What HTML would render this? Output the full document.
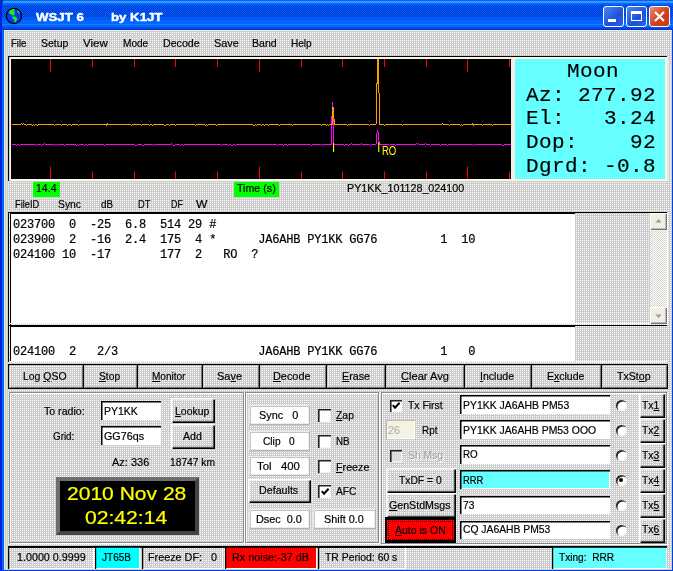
<!DOCTYPE html>
<html><head><meta charset="utf-8"><title>WSJT 6 by K1JT</title>
<style>
html,body{margin:0;padding:0}
body{width:673px;height:571px;position:relative;overflow:hidden;background:#0a3fd6;font-family:"Liberation Sans",sans-serif;font-size:11px;color:#000}
div,span,svg{position:absolute;box-sizing:border-box}
.t{white-space:nowrap;transform-origin:0 0;display:block;-webkit-text-stroke:0.2px}
.t u{text-decoration:underline}
.d{background-color:#ccc;background-image:linear-gradient(90deg,rgba(0,0,0,0) 50%,#ccc 50%),linear-gradient(#fff 50%,#ccc 50%);background-size:2px 2px}
.btn{box-shadow:inset 1.6px 1.6px 0 #fff,inset -1.3px -1.3px 0 #000,inset -2.2px -2.2px 0 #666}
.btn2{box-shadow:inset 0 0 0 1.2px #000,inset 2.2px 2.2px 0 #fff,inset -2.2px -2.2px 0 #999}
.sunk{background:#fff;box-shadow:inset 1.5px 1.6px 0 #000,inset -1px -1px 0 #fff}
.flat{background:#fff;border:1px solid;border-color:#ececec #b4b4b4 #b4b4b4 #ececec;box-shadow:inset 1px 1px 0 #c4c4c4,inset -1px -1px 0 #ececec}
.grv{border:1px solid #8a8a8a;box-shadow:inset 1px 1px 0 #fff,1px 1px 0 #fff}
.mono{font-family:"Liberation Mono",monospace;white-space:pre;-webkit-text-stroke:0}
.chk{background:#fff;box-shadow:inset 1.6px 1.6px 0 #222,inset -1px -1px 0 #f4f4f4}
.rad{border-radius:50%;background:#fff;box-shadow:inset 1.5px 1.5px 0 #222,inset -1px -1px 0 #f4f4f4}
.st{box-shadow:inset 1.2px 1.7px 0 #000,inset -1px -1px 0 #fff}
</style></head><body><div id="w" style="left:0;top:0;width:673px;height:571px;will-change:transform">

<div class="" style="left:0px;top:0px;width:673px;height:30px;background:#06f"></div>
<div class="" style="left:0px;top:0px;width:673px;height:1px;background:#0a5ef0"></div>
<div class="" style="left:0px;top:1px;width:673px;height:2px;background:#39f"></div>
<div class="" style="left:0px;top:5px;width:673px;height:12px;background:repeating-conic-gradient(#06f 0 25%,#03c 0 50%) 0 0/2px 2px"></div>
<div class="" style="left:0px;top:17px;width:673px;height:3px;background:#0059f2"></div>
<div class="" style="left:0px;top:24px;width:673px;height:1px;background:#1a7aff"></div>
<div class="" style="left:0px;top:27px;width:673px;height:2px;background:repeating-conic-gradient(#06f 0 25%,#03c 0 50%) 0 0/2px 2px"></div>
<div class="" style="left:0px;top:29px;width:673px;height:1px;background:#03c"></div>
<div class="" style="left:0px;top:3px;width:2px;height:568px;background:#02d"></div>
<div class="" style="left:2px;top:30px;width:2px;height:541px;background:#06f"></div>
<div class="" style="left:671.6px;top:30px;width:1.4px;height:541px;background:#04d"></div>
<div class="" style="left:0px;top:569.6px;width:673px;height:1.4px;background:#04d"></div>
<div class="" style="left:0px;top:0px;width:3px;height:3px;background:#0830b0;"></div>
<svg style="left:5px;top:7px" width="18" height="18" viewBox="0 0 18 18"><circle cx="9" cy="9" r="7.6" fill="#0a35f0" stroke="#000" stroke-width="1.3"/><path d="M4.5 3.5 L8 2 L10 2.5 L9 4.5 L10.5 5.5 L9 7 L10 8 L8.5 8.5 L6.5 8 L5 6.5 L3.5 6 Z M7 9.5 L10 9.5 L12 11 L12.5 12 L11.5 13 L11 15.5 L9.5 15 L9 12.5 L7.5 11.5 Z M12 3 L14 4.5 L15 7 L14 6.5 L12.5 5 Z" fill="#10f020"/></svg>
<span class="t" style="left:36.20px;top:9.60px;font-size:11px;line-height:14px;transform:scaleX(1.2031);color:#fff;font-weight:bold;-webkit-text-stroke:0.4px;">WSJT 6</span>
<span class="t" style="left:110.90px;top:9.60px;font-size:11px;line-height:14px;transform:scaleX(1.2011);color:#fff;font-weight:bold;-webkit-text-stroke:0.4px;">by K1JT</span>
<div class="" style="left:603px;top:6px;width:21px;height:21px;border:1px solid #fff;border-radius:3px;background:linear-gradient(135deg,#4d86f0,#1c50d8 60%,#2a63e6)"></div>
<div class="" style="left:608px;top:19px;width:8px;height:3px;background:#fff"></div>
<div class="" style="left:626px;top:6px;width:21px;height:21px;border:1px solid #fff;border-radius:3px;background:linear-gradient(135deg,#4d86f0,#1c50d8 60%,#2a63e6)"></div>
<div class="" style="left:631px;top:11px;width:11px;height:10px;border:1px solid #fff;border-top:3px solid #fff"></div>
<div class="" style="left:649px;top:6px;width:21px;height:21px;border:1px solid #fff;border-radius:3px;background:linear-gradient(135deg,#ea8a6c,#d0421c 55%,#c83a14)"></div>
<svg style="left:649px;top:6px" width="21" height="21"><path d="M6 6 L15 15 M15 6 L6 15" stroke="#fff" stroke-width="2.2" fill="none"/></svg>
<div class="d" style="left:4px;top:30px;width:667.6px;height:539.6px;"></div>
<div class="" style="left:4px;top:30px;width:667.6px;height:1px;background:#eee"></div>
<div class="" style="left:4px;top:30px;width:1px;height:539.6px;background:#e6e6e6"></div>
<span class="t" style="left:10.60px;top:36.00px;font-size:11px;line-height:14px;transform:scaleX(0.8688);">File</span>
<span class="t" style="left:40.90px;top:36.00px;font-size:11px;line-height:14px;transform:scaleX(0.9497);">Setup</span>
<span class="t" style="left:83.30px;top:36.00px;font-size:11px;line-height:14px;transform:scaleX(1.0446);">View</span>
<span class="t" style="left:123.00px;top:36.00px;font-size:11px;line-height:14px;transform:scaleX(0.9158);">Mode</span>
<span class="t" style="left:162.60px;top:36.00px;font-size:11px;line-height:14px;transform:scaleX(0.9653);">Decode</span>
<span class="t" style="left:213.60px;top:36.00px;font-size:11px;line-height:14px;transform:scaleX(0.9891);">Save</span>
<span class="t" style="left:252.30px;top:36.00px;font-size:11px;line-height:14px;transform:scaleX(0.9614);">Band</span>
<span class="t" style="left:291.40px;top:36.00px;font-size:11px;line-height:14px;transform:scaleX(0.9150);">Help</span>
<div class="" style="left:8.4px;top:56px;width:658.4px;height:1px;background:#000"></div>
<div class="" style="left:8.4px;top:56px;width:1.1px;height:125px;background:#000"></div>
<div class="" style="left:9.5px;top:57px;width:657.5px;height:1.6px;background:#f8f6e4"></div>
<div class="" style="left:9.5px;top:57px;width:1.5px;height:124px;background:#f8f6e4"></div>
<div class="" style="left:9.5px;top:179px;width:657.5px;height:1.6px;background:#f8f6e4"></div>
<div class="" style="left:665.3px;top:57px;width:1.7px;height:124px;background:#f8f6e4"></div>
<div class="" style="left:667px;top:56px;width:2px;height:125px;background:#e8e8e8"></div>
<div class="" style="left:11px;top:58.6px;width:500.1px;height:120.4px;background:#000"></div>
<div class="" style="left:511.1px;top:58.6px;width:3.6px;height:120.4px;background:#f0f0e6"></div>
<svg style="left:0;top:0" width="673" height="571" viewBox="0 0 673 571"><rect x="50.0" y="59" width="1" height="13" fill="#f00"/><rect x="50.0" y="166.5" width="1" height="12.5" fill="#f00"/><rect x="92.0" y="59" width="1" height="8" fill="#f00"/><rect x="92.0" y="171.5" width="1" height="7.5" fill="#f00"/><rect x="134.0" y="59" width="1" height="8" fill="#f00"/><rect x="134.0" y="171.5" width="1" height="7.5" fill="#f00"/><rect x="175.0" y="59" width="1" height="8" fill="#f00"/><rect x="175.0" y="171.5" width="1" height="7.5" fill="#f00"/><rect x="217.0" y="59" width="1" height="8" fill="#f00"/><rect x="217.0" y="171.5" width="1" height="7.5" fill="#f00"/><rect x="259.0" y="59" width="1" height="13" fill="#f00"/><rect x="259.0" y="166.5" width="1" height="12.5" fill="#f00"/><rect x="301.0" y="59" width="1" height="8" fill="#f00"/><rect x="301.0" y="171.5" width="1" height="7.5" fill="#f00"/><rect x="342.0" y="59" width="1" height="8" fill="#f00"/><rect x="342.0" y="171.5" width="1" height="7.5" fill="#f00"/><rect x="384.0" y="59" width="1" height="8" fill="#f00"/><rect x="384.0" y="171.5" width="1" height="7.5" fill="#f00"/><rect x="426.0" y="59" width="1" height="8" fill="#f00"/><rect x="426.0" y="171.5" width="1" height="7.5" fill="#f00"/><rect x="467.0" y="59" width="1" height="13" fill="#f00"/><rect x="467.0" y="166.5" width="1" height="12.5" fill="#f00"/><rect x="509.0" y="59" width="1" height="8" fill="#f00"/><rect x="509.0" y="171.5" width="1" height="7.5" fill="#f00"/><polyline points="11.5,144.5 12.5,144.5 13.5,144.5 14.5,144.5 15.5,144.5 16.5,145.5 17.5,144.5 18.5,144.5 19.5,145.5 20.5,144.5 21.5,144.5 22.5,144.5 23.5,144.5 24.5,144.5 25.5,144.5 26.5,144.5 27.5,144.5 28.5,144.5 29.5,144.5 30.5,144.5 31.5,144.5 32.5,144.5 33.5,144.5 34.5,144.5 35.5,144.5 36.5,145.5 37.5,144.5 38.5,144.5 39.5,144.5 40.5,144.5 41.5,145.5 42.5,144.5 43.5,144.5 44.5,143.5 45.5,144.5 46.5,144.5 47.5,144.5 48.5,144.5 49.5,144.5 50.5,144.5 51.5,144.5 52.5,144.5 53.5,144.5 54.5,145.5 55.5,144.5 56.5,144.5 57.5,145.5 58.5,144.5 59.5,144.5 60.5,144.5 61.5,144.5 62.5,144.5 63.5,144.5 64.5,145.5 65.5,144.5 66.5,144.5 67.5,144.5 68.5,144.5 69.5,144.5 70.5,144.5 71.5,144.5 72.5,144.5 73.5,144.5 74.5,144.5 75.5,144.5 76.5,145.5 77.5,144.5 78.5,145.5 79.5,144.5 80.5,144.5 81.5,144.5 82.5,144.5 83.5,144.5 84.5,145.5 85.5,144.5 86.5,144.5 87.5,145.5 88.5,144.5 89.5,144.5 90.5,144.5 91.5,144.5 92.5,144.5 93.5,144.5 94.5,144.5 95.5,144.5 96.5,144.5 97.5,144.5 98.5,144.5 99.5,144.5 100.5,144.5 101.5,144.5 102.5,144.5 103.5,144.5 104.5,145.5 105.5,144.5 106.5,144.5 107.5,144.5 108.5,144.5 109.5,144.5 110.5,144.5 111.5,144.5 112.5,144.5 113.5,144.5 114.5,144.5 115.5,144.5 116.5,144.5 117.5,144.5 118.5,144.5 119.5,144.5 120.5,144.5 121.5,144.5 122.5,144.5 123.5,144.5 124.5,144.5 125.5,144.5 126.5,144.5 127.5,144.5 128.5,144.5 129.5,144.5 130.5,144.5 131.5,144.5 132.5,144.5 133.5,144.5 134.5,144.5 135.5,145.5 136.5,145.5 137.5,144.5 138.5,144.5 139.5,144.5 140.5,144.5 141.5,144.5 142.5,145.5 143.5,145.5 144.5,144.5 145.5,144.5 146.5,144.5 147.5,144.5 148.5,144.5 149.5,144.5 150.5,144.5 151.5,144.5 152.5,144.5 153.5,145.5 154.5,144.5 155.5,144.5 156.5,144.5 157.5,144.5 158.5,144.5 159.5,144.5 160.5,144.5 161.5,144.5 162.5,144.5 163.5,144.5 164.5,144.5 165.5,144.5 166.5,144.5 167.5,144.5 168.5,144.5 169.5,144.5 170.5,144.5 171.5,143.5 172.5,144.5 173.5,145.5 174.5,145.5 175.5,144.5 176.5,144.5 177.5,144.5 178.5,144.5 179.5,144.5 180.5,145.5 181.5,144.5 182.5,144.5 183.5,145.5 184.5,144.5 185.5,144.5 186.5,144.5 187.5,144.5 188.5,144.5 189.5,144.5 190.5,144.5 191.5,144.5 192.5,144.5 193.5,144.5 194.5,144.5 195.5,144.5 196.5,144.5 197.5,144.5 198.5,144.5 199.5,144.5 200.5,144.5 201.5,144.5 202.5,144.5 203.5,144.5 204.5,144.5 205.5,144.5 206.5,144.5 207.5,144.5 208.5,144.5 209.5,144.5 210.5,144.5 211.5,144.5 212.5,144.5 213.5,144.5 214.5,144.5 215.5,144.5 216.5,144.5 217.5,144.5 218.5,144.5 219.5,144.5 220.5,144.5 221.5,145.5 222.5,144.5 223.5,144.5 224.5,144.5 225.5,144.5 226.5,144.5 227.5,144.5 228.5,145.5 229.5,144.5 230.5,144.5 231.5,145.5 232.5,145.5 233.5,144.5 234.5,144.5 235.5,145.5 236.5,144.5 237.5,144.5 238.5,144.5 239.5,144.5 240.5,144.5 241.5,144.5 242.5,144.5 243.5,144.5 244.5,144.5 245.5,144.5 246.5,144.5 247.5,144.5 248.5,144.5 249.5,144.5 250.5,144.5 251.5,144.5 252.5,144.5 253.5,144.5 254.5,144.5 255.5,144.5 256.5,144.5 257.5,144.5 258.5,144.5 259.5,144.5 260.5,144.5 261.5,144.5 262.5,144.5 263.5,144.5 264.5,144.5 265.5,144.5 266.5,144.5 267.5,144.5 268.5,144.5 269.5,144.5 270.5,144.5 271.5,144.5 272.5,144.5 273.5,144.5 274.5,144.5 275.5,144.5 276.5,144.5 277.5,145.5 278.5,144.5 279.5,144.5 280.5,144.5 281.5,144.5 282.5,144.5 283.5,145.5 284.5,144.5 285.5,144.5 286.5,144.5 287.5,145.5 288.5,144.5 289.5,144.5 290.5,144.5 291.5,144.5 292.5,144.5 293.5,144.5 294.5,144.5 295.5,144.5 296.5,144.5 297.5,144.5 298.5,144.5 299.5,144.5 300.5,144.5 301.5,144.5 302.5,144.5 303.5,144.5 304.5,144.5 305.5,144.5 306.5,144.5 307.5,144.5 308.5,144.5 309.5,144.5 310.5,144.5 311.5,145.5 312.5,144.5 313.5,144.5 314.5,144.5 315.5,144.5 316.5,144.5 317.5,144.5 318.5,144.5 319.5,144.5 320.5,144.5 321.5,145.5 322.5,144.5 323.5,144.5 324.5,144.5 325.5,144.5 326.5,144.5 327.5,144.5 328.5,144.5 329.5,144.5 330.5,144.5 331.6,144.5 332.2,104.0 332.7,102.0 333.3,116.0 334.0,144.5 336.5,144.5 337.5,144.5 338.5,144.5 339.5,144.5 340.5,144.5 341.5,144.5 342.5,144.5 343.5,144.5 344.5,145.5 345.5,144.5 346.5,144.5 347.5,144.5 348.5,145.5 349.5,144.5 350.5,144.5 351.5,143.5 352.5,144.5 353.5,144.5 354.5,144.5 355.5,144.5 356.5,144.5 357.5,144.5 358.5,144.5 359.5,144.5 360.5,144.5 361.5,143.5 362.5,144.5 363.5,144.5 364.5,144.5 365.5,144.5 366.5,144.5 367.5,144.5 368.5,144.5 369.5,144.5 370.5,145.5 371.5,144.5 372.5,144.5 373.5,144.5 374.5,144.5 376.2,144.0 376.9,134.0 377.7,130.0 378.5,134.0 379.3,144.5 382.5,144.5 383.5,144.5 384.5,144.5 385.5,144.5 386.5,144.5 387.5,144.5 388.5,144.5 389.5,145.5 390.5,144.5 391.5,144.5 392.5,144.5 393.5,144.5 394.5,144.5 395.5,145.5 396.5,144.5 397.5,144.5 398.5,144.5 399.5,144.5 400.5,144.5 401.5,144.5 402.5,144.5 403.5,144.5 404.5,144.5 405.5,144.5 406.5,144.5 407.5,144.5 408.5,144.5 409.5,144.5 410.5,144.5 411.5,144.5 412.5,144.5 413.5,144.5 414.5,144.5 415.5,144.5 416.5,143.5 417.5,144.5 418.5,143.5 419.5,144.5 420.5,144.5 421.5,144.5 422.5,144.5 423.5,144.5 424.5,144.5 425.5,143.5 426.5,144.5 427.5,144.5 428.5,144.5 429.5,144.5 430.5,145.5 431.5,144.5 432.5,144.5 433.5,144.5 434.5,144.5 435.5,144.5 436.5,144.5 437.5,144.5 438.5,144.5 439.5,144.5 440.5,145.5 441.5,144.5 442.5,144.5 443.5,144.5 444.5,144.5 445.5,144.5 446.5,144.5 447.5,145.5 448.5,144.5 449.5,144.5 450.5,144.5 451.5,144.5 452.5,144.5 453.5,144.5 454.5,144.5 455.5,144.5 456.5,144.5 457.5,144.5 458.5,144.5 459.5,144.5 460.5,144.5 461.5,144.5 462.5,144.5 463.5,144.5 464.5,144.5 465.5,144.5 466.5,144.5 467.5,144.5 468.5,144.5 469.5,144.5 470.5,144.5 471.5,144.5 472.5,144.5 473.5,145.5 474.5,144.5 475.5,144.5 476.5,144.5 477.5,144.5 478.5,144.5 479.5,144.5 480.5,144.5 481.5,144.5 482.5,144.5 483.5,144.5 484.5,144.5 485.5,144.5 486.5,144.5 487.5,144.5 488.5,144.5 489.5,144.5 490.5,144.5 491.5,144.5 492.5,144.5 493.5,144.5 494.5,144.5 495.5,144.5 496.5,144.5 497.5,144.5 498.5,144.5 499.5,144.5 500.5,144.5 501.5,144.5 502.5,145.5 503.5,145.5 504.5,144.5 505.5,144.5 506.5,144.5 507.5,144.5 508.5,144.5 509.5,144.5 510.5,144.5" fill="none" stroke="#ff00ff" stroke-width="1" shape-rendering="crispEdges"/><polyline points="11.5,124.5 12.5,124.5 13.5,124.5 14.5,124.5 15.5,124.5 16.5,124.5 17.5,124.5 18.5,124.5 19.5,124.5 20.5,124.5 21.5,123.5 22.5,124.5 23.5,123.5 24.5,124.5 25.5,124.5 26.5,125.5 27.5,124.5 28.5,124.5 29.5,124.5 30.5,124.5 31.5,124.5 32.5,125.5 33.5,124.5 34.5,125.5 35.5,124.5 36.5,124.5 37.5,125.5 38.5,124.5 39.5,124.5 40.5,124.5 41.5,124.5 42.5,124.5 43.5,124.5 44.5,124.5 45.5,124.5 46.5,124.5 47.5,124.5 48.5,124.5 49.5,124.5 50.5,124.5 51.5,124.5 52.5,124.5 53.5,124.5 54.5,125.5 55.5,124.5 56.5,124.5 57.5,124.5 58.5,124.5 59.5,124.5 60.5,124.5 61.5,125.5 62.5,124.5 63.5,124.5 64.5,124.5 65.5,124.5 66.5,124.5 67.5,125.5 68.5,124.5 69.5,124.5 70.5,124.5 71.5,125.5 72.5,124.5 73.5,124.5 74.5,124.5 75.5,124.5 76.5,124.5 77.5,124.5 78.5,125.5 79.5,124.5 80.5,124.5 81.5,124.5 82.5,124.5 83.5,124.5 84.5,124.5 85.5,124.5 86.5,124.5 87.5,124.5 88.5,124.5 89.5,124.5 90.5,124.5 91.5,124.5 92.5,124.5 93.5,124.5 94.5,124.5 95.5,124.5 96.5,124.5 97.5,124.5 98.5,124.5 99.5,124.5 100.5,124.5 101.5,124.5 102.5,124.5 103.5,124.5 104.5,124.5 105.5,124.5 106.5,125.5 107.5,123.5 108.5,124.5 109.5,124.5 110.5,124.5 111.5,124.5 112.5,124.5 113.5,124.5 114.5,124.5 115.5,124.5 116.5,124.5 117.5,124.5 118.5,124.5 119.5,124.5 120.5,124.5 121.5,124.5 122.5,124.5 123.5,124.5 124.5,124.5 125.5,124.5 126.5,124.5 127.5,124.5 128.5,124.5 129.5,124.5 130.5,124.5 131.5,125.5 132.5,124.5 133.5,124.5 134.5,124.5 135.5,124.5 136.5,124.5 137.5,124.5 138.5,124.5 139.5,124.5 140.5,124.5 141.5,125.5 142.5,124.5 143.5,124.5 144.5,124.5 145.5,124.5 146.5,124.5 147.5,124.5 148.5,124.5 149.5,125.5 150.5,124.5 151.5,124.5 152.5,125.5 153.5,124.5 154.5,124.5 155.5,124.5 156.5,124.5 157.5,124.5 158.5,124.5 159.5,124.5 160.5,124.5 161.5,124.5 162.5,124.5 163.5,124.5 164.5,125.5 165.5,125.5 166.5,124.5 167.5,124.5 168.5,124.5 169.5,125.5 170.5,124.5 171.5,124.5 172.5,124.5 173.5,124.5 174.5,124.5 175.5,125.5 176.5,124.5 177.5,124.5 178.5,124.5 179.5,124.5 180.5,124.5 181.5,124.5 182.5,124.5 183.5,124.5 184.5,124.5 185.5,124.5 186.5,124.5 187.5,124.5 188.5,124.5 189.5,124.5 190.5,124.5 191.5,124.5 192.5,124.5 193.5,124.5 194.5,124.5 195.5,125.5 196.5,124.5 197.5,124.5 198.5,124.5 199.5,124.5 200.5,124.5 201.5,124.5 202.5,124.5 203.5,124.5 204.5,124.5 205.5,125.5 206.5,124.5 207.5,125.5 208.5,124.5 209.5,124.5 210.5,124.5 211.5,124.5 212.5,124.5 213.5,124.5 214.5,124.5 215.5,124.5 216.5,125.5 217.5,124.5 218.5,124.5 219.5,124.5 220.5,124.5 221.5,124.5 222.5,124.5 223.5,124.5 224.5,124.5 225.5,124.5 226.5,124.5 227.5,124.5 228.5,124.5 229.5,124.5 230.5,124.5 231.5,124.5 232.5,124.5 233.5,124.5 234.5,124.5 235.5,124.5 236.5,124.5 237.5,124.5 238.5,124.5 239.5,124.5 240.5,124.5 241.5,124.5 242.5,124.5 243.5,124.5 244.5,124.5 245.5,124.5 246.5,124.5 247.5,124.5 248.5,124.5 249.5,124.5 250.5,124.5 251.5,124.5 252.5,124.5 253.5,125.5 254.5,125.5 255.5,124.5 256.5,125.5 257.5,124.5 258.5,124.5 259.5,124.5 260.5,124.5 261.5,125.5 262.5,124.5 263.5,124.5 264.5,125.5 265.5,124.5 266.5,124.5 267.5,124.5 268.5,125.5 269.5,124.5 270.5,124.5 271.5,124.5 272.5,124.5 273.5,124.5 274.5,124.5 275.5,124.5 276.5,124.5 277.5,124.5 278.5,124.5 279.5,125.5 280.5,124.5 281.5,124.5 282.5,124.5 283.5,124.5 284.5,124.5 285.5,124.5 286.5,124.5 287.5,124.5 288.5,124.5 289.5,124.5 290.5,124.5 291.5,124.5 292.5,125.5 293.5,124.5 294.5,124.5 295.5,124.5 296.5,124.5 297.5,124.5 298.5,124.5 299.5,124.5 300.5,124.5 301.5,124.5 302.5,124.5 303.5,124.5 304.5,124.5 305.5,124.5 306.5,124.5 307.5,124.5 308.5,124.5 309.5,124.5 310.5,124.5 311.5,124.5 312.5,124.5 313.5,124.5 314.5,124.5 315.5,124.5 316.5,124.5 317.5,124.5 318.5,124.5 319.5,124.5 320.5,124.5 321.5,125.5 322.5,124.5 323.5,124.5 324.5,124.5 325.5,124.5 326.5,125.5 327.5,124.5 328.5,125.5 329.5,124.5 330.5,124.5 332.2,124.5 332.8,107.0 333.6,107.0 334.2,124.5 336.5,124.5 337.5,124.5 338.5,124.5 339.5,124.5 340.5,124.5 341.5,124.5 342.5,124.5 343.5,124.5 344.5,124.5 345.5,124.5 346.5,124.5 347.5,125.5 348.5,124.5 349.5,124.5 350.5,124.5 351.5,124.5 352.5,124.5 353.5,124.5 354.5,124.5 355.5,124.5 356.5,124.5 357.5,124.5 358.5,124.5 359.5,124.5 360.5,124.5 361.5,124.5 362.5,124.5 363.5,124.5 364.5,124.5 365.5,124.5 366.5,124.5 367.5,124.5 368.5,124.5 369.5,125.5 370.5,124.5 371.5,124.5 372.5,124.5 373.5,124.5 374.5,124.5 376.4,124.0 376.6,84.0 377.3,83.0 377.5,59.0 378.3,59.0 378.5,92.0 379.2,93.0 379.6,124.5 382.5,124.5 383.5,124.5 384.5,125.5 385.5,124.5 386.5,124.5 387.5,124.5 388.5,124.5 389.5,124.5 390.5,124.5 391.5,124.5 392.5,124.5 393.5,124.5 394.5,124.5 395.5,124.5 396.5,124.5 397.5,124.5 398.5,124.5 399.5,124.5 400.5,124.5 401.5,124.5 402.5,125.5 403.5,124.5 404.5,124.5 405.5,124.5 406.5,124.5 407.5,124.5 408.5,124.5 409.5,124.5 410.5,124.5 411.5,124.5 412.5,124.5 413.5,124.5 414.5,124.5 415.5,124.5 416.5,124.5 417.5,124.5 418.5,124.5 419.5,124.5 420.5,124.5 421.5,124.5 422.5,124.5 423.5,124.5 424.5,124.5 425.5,124.5 426.5,124.5 427.5,124.5 428.5,124.5 429.5,124.5 430.5,124.5 431.5,124.5 432.5,124.5 433.5,124.5 434.5,124.5 435.5,124.5 436.5,124.5 437.5,124.5 438.5,124.5 439.5,124.5 440.5,124.5 441.5,124.5 442.5,123.5 443.5,124.5 444.5,124.5 445.5,124.5 446.5,124.5 447.5,124.5 448.5,124.5 449.5,125.5 450.5,124.5 451.5,124.5 452.5,124.5 453.5,124.5 454.5,124.5 455.5,124.5 456.5,124.5 457.5,124.5 458.5,124.5 459.5,124.5 460.5,125.5 461.5,124.5 462.5,125.5 463.5,124.5 464.5,124.5 465.5,124.5 466.5,124.5 467.5,124.5 468.5,124.5 469.5,124.5 470.5,124.5 471.5,124.5 472.5,123.5 473.5,125.5 474.5,124.5 475.5,124.5 476.5,124.5 477.5,124.5 478.5,124.5 479.5,124.5 480.5,124.5 481.5,124.5 482.5,125.5 483.5,124.5 484.5,124.5 485.5,124.5 486.5,124.5 487.5,124.5 488.5,124.5 489.5,124.5 490.5,124.5 491.5,124.5 492.5,125.5 493.5,124.5 494.5,124.5 495.5,124.5 496.5,124.5 497.5,124.5 498.5,124.5 499.5,124.5 500.5,124.5 501.5,124.5 502.5,124.5 503.5,124.5 504.5,124.5 505.5,124.5 506.5,124.5 507.5,124.5 508.5,124.5 509.5,124.5 510.5,124.5" fill="none" stroke="#ff9c00" stroke-width="1" shape-rendering="crispEdges"/><rect x="333" y="143" width="1.1" height="9" fill="#ff0"/><rect x="378.2" y="142" width="1.1" height="10" fill="#ff0"/><text x="381.9" y="154.8" font-family="Liberation Sans, sans-serif" font-size="12" fill="#ff0" textLength="14.4" lengthAdjust="spacingAndGlyphs">RO</text></svg>
<div class="" style="left:514.7px;top:58.6px;width:150.6px;height:120.4px;background:#6ff"></div>
<span class="t mono" style="left:528px;top:59.50px;width:130px;font-size:21px;line-height:24px;text-align:center;letter-spacing:0.4px;-webkit-text-stroke:0.15px">Moon</span>
<span class="t mono" style="left:526px;top:83.50px;width:130px;font-size:21px;line-height:24px;text-align:left;letter-spacing:0.4px;-webkit-text-stroke:0.15px">Az:&nbsp;277.92</span>
<span class="t mono" style="left:526px;top:107.10px;width:130px;font-size:21px;line-height:24px;text-align:left;letter-spacing:0.4px;-webkit-text-stroke:0.15px">El:&nbsp;&nbsp;&nbsp;3.24</span>
<span class="t mono" style="left:526px;top:130.90px;width:130px;font-size:21px;line-height:24px;text-align:left;letter-spacing:0.4px;-webkit-text-stroke:0.15px">Dop:&nbsp;&nbsp;&nbsp;&nbsp;92</span>
<span class="t mono" style="left:526px;top:155.10px;width:130px;font-size:21px;line-height:24px;text-align:left;letter-spacing:0.4px;-webkit-text-stroke:0.15px">Dgrd:&nbsp;-0.8</span>
<div class="" style="left:33px;top:182px;width:27px;height:15px;background:#0f0"></div>
<span class="t" style="left:35.80px;top:181.40px;font-size:11px;line-height:14px;transform:scaleX(0.9575);">14.4</span>
<div class="" style="left:233.5px;top:182px;width:45.5px;height:15px;background:#0f0"></div>
<span class="t" style="left:236.80px;top:181.40px;font-size:11px;line-height:14px;transform:scaleX(0.9694);">Time (s)</span>
<span class="t" style="left:346.60px;top:181.30px;font-size:11px;line-height:14px;transform:scaleX(0.9734);">PY1KK_101128_024100</span>
<span class="t" style="left:14.70px;top:196.70px;font-size:11px;line-height:14px;transform:scaleX(0.8425);">FileID</span>
<span class="t" style="left:58.00px;top:196.70px;font-size:11px;line-height:14px;transform:scaleX(0.9405);">Sync</span>
<span class="t" style="left:101.00px;top:196.70px;font-size:11px;line-height:14px;transform:scaleX(0.8918);">dB</span>
<span class="t" style="left:137.60px;top:196.70px;font-size:11px;line-height:14px;transform:scaleX(0.8456);">DT</span>
<span class="t" style="left:171.20px;top:196.70px;font-size:11px;line-height:14px;transform:scaleX(0.8047);">DF</span>
<span class="t" style="left:195.60px;top:196.70px;font-size:11px;line-height:14px;transform:scaleX(1.0980);">W</span>
<div class="" style="left:8px;top:212px;width:659px;height:1px;background:#000"></div>
<div class="" style="left:8px;top:212px;width:1px;height:113px;background:#000"></div>
<div class="" style="left:9px;top:213px;width:1px;height:112px;background:#e8e8e8"></div>
<div class="" style="left:10px;top:212px;width:1.4px;height:113px;background:#000"></div>
<div class="" style="left:11px;top:212px;width:564px;height:2px;background:#000"></div>
<div class="" style="left:11px;top:214px;width:564px;height:109px;background:#fff"></div>
<div class="" style="left:9px;top:323.3px;width:658px;height:1.2px;background:#f2f2f2"></div>
<div class="" style="left:650px;top:213px;width:17px;height:110.5px;background-color:#fff;background-image:linear-gradient(45deg,#d8d4cc 25%,rgba(0,0,0,0) 25%,rgba(0,0,0,0) 75%,#d8d4cc 75%),linear-gradient(45deg,#d8d4cc 25%,rgba(0,0,0,0) 25%,rgba(0,0,0,0) 75%,#d8d4cc 75%);background-size:2px 2px;background-position:0 0,1px 1px"></div>
<div class="" style="left:650px;top:213px;width:17px;height:17px;background:#f1efe4;box-shadow:inset 1px 1px 0 #fff,inset -1px -1px 0 #777,inset -2px -2px 0 #bbb"></div>
<svg style="left:650px;top:213px" width="17" height="17"><polygon points="8.5,6 11.5,9.5 5.5,9.5" fill="#9a9890"/></svg>
<div class="" style="left:650px;top:306.5px;width:17px;height:17px;background:#f1efe4;box-shadow:inset 1px 1px 0 #fff,inset -1px -1px 0 #777,inset -2px -2px 0 #bbb"></div>
<svg style="left:650px;top:306.5px" width="17" height="17"><polygon points="5.5,7.5 11.5,7.5 8.5,11" fill="#9a9890"/></svg>
<div class="" style="left:667px;top:213px;width:1px;height:112px;background:#fff"></div>
<div class="" style="left:8px;top:325px;width:659px;height:1px;background:#000"></div>
<div class="" style="left:8px;top:325px;width:1px;height:37px;background:#000"></div>
<div class="" style="left:9px;top:326px;width:1px;height:36px;background:#e8e8e8"></div>
<div class="" style="left:10px;top:325px;width:1.4px;height:37px;background:#000"></div>
<div class="" style="left:11px;top:325px;width:564px;height:2.4px;background:#000"></div>
<div class="" style="left:11px;top:327.4px;width:564px;height:33.6px;background:#fff"></div>
<div class="" style="left:9px;top:361px;width:658px;height:1.2px;background:#f2f2f2"></div>
<span class="t mono" style="left:13.1px;top:217.50px;font-size:12px;line-height:15px;letter-spacing:-0.2px;-webkit-text-stroke:0.2px">023700  0  -25  6.8  514 29 #</span>
<span class="t mono" style="left:13.1px;top:232.50px;font-size:12px;line-height:15px;letter-spacing:-0.2px;-webkit-text-stroke:0.2px">023900  2  -16  2.4  175  4 *      JA6AHB PY1KK GG76         1  10</span>
<span class="t mono" style="left:13.1px;top:247.50px;font-size:12px;line-height:15px;letter-spacing:-0.2px;-webkit-text-stroke:0.2px">024100 10  -17       177  2   RO  ?</span>
<span class="t mono" style="left:13.1px;top:345.30px;font-size:12px;line-height:15px;letter-spacing:-0.2px;-webkit-text-stroke:0.2px">024100  2   2/3                    JA6AHB PY1KK GG76         1   0</span>
<div class="btn2" style="left:8px;top:363.5px;width:76px;height:25px;"></div>
<div class="btn2" style="left:83px;top:363.5px;width:54.5px;height:25px;"></div>
<div class="btn2" style="left:136.5px;top:363.5px;width:66.5px;height:25px;"></div>
<div class="btn2" style="left:202px;top:363.5px;width:57.5px;height:25px;"></div>
<div class="btn2" style="left:258.5px;top:363.5px;width:68.5px;height:25px;"></div>
<div class="btn2" style="left:326px;top:363.5px;width:60px;height:25px;"></div>
<div class="btn2" style="left:385px;top:363.5px;width:80px;height:25px;"></div>
<div class="btn2" style="left:464px;top:363.5px;width:67.5px;height:25px;"></div>
<div class="btn2" style="left:530.5px;top:363.5px;width:71.0px;height:25px;"></div>
<div class="btn2" style="left:600.5px;top:363.5px;width:67.5px;height:25px;"></div>
<span class="t" style="left:23.40px;top:368.70px;font-size:11px;line-height:14px;transform:scaleX(0.9486);">Log <u>Q</u>SO</span>
<span class="t" style="left:99.30px;top:368.70px;font-size:11px;line-height:14px;transform:scaleX(0.9324);"><u>S</u>top</span>
<span class="t" style="left:152.20px;top:368.70px;font-size:11px;line-height:14px;transform:scaleX(0.9106);"><u>M</u>onitor</span>
<span class="t" style="left:217.40px;top:368.70px;font-size:11px;line-height:14px;transform:scaleX(1.0011);">Sa<u>v</u>e</span>
<span class="t" style="left:272.90px;top:368.70px;font-size:11px;line-height:14px;transform:scaleX(0.9890);"><u>D</u>ecode</span>
<span class="t" style="left:341.50px;top:368.70px;font-size:11px;line-height:14px;transform:scaleX(0.9778);"><u>E</u>rase</span>
<span class="t" style="left:400.70px;top:368.70px;font-size:11px;line-height:14px;transform:scaleX(1.0086);"><u>C</u>lear Avg</span>
<span class="t" style="left:480.30px;top:368.70px;font-size:11px;line-height:14px;transform:scaleX(0.9613);"><u>I</u>nclude</span>
<span class="t" style="left:546.60px;top:368.70px;font-size:11px;line-height:14px;transform:scaleX(0.9557);">E<u>x</u>clude</span>
<span class="t" style="left:616.70px;top:368.70px;font-size:11px;line-height:14px;transform:scaleX(0.9642);">TxSt<u>o</u>p</span>
<div class="grv" style="left:8.5px;top:391.5px;width:235.5px;height:151.5px;"></div>
<span class="t" style="left:44.00px;top:403.70px;font-size:11px;line-height:14px;transform:scaleX(0.9623);">To radio:</span>
<span class="t" style="left:53.00px;top:428.50px;font-size:11px;line-height:14px;transform:scaleX(0.8936);">Grid:</span>
<div class="sunk" style="left:101px;top:401px;width:59.5px;height:19px;"></div>
<span class="t" style="left:103.50px;top:404.00px;font-size:11px;line-height:14px;transform:scaleX(0.9502);">PY1KK</span>
<div class="sunk" style="left:101px;top:426px;width:59.5px;height:19px;"></div>
<span class="t" style="left:103.50px;top:429.00px;font-size:11px;line-height:14px;transform:scaleX(0.9764);">GG76qs</span>
<div class="btn" style="left:171px;top:398px;width:44px;height:24.5px;"></div>
<span class="t" style="left:174.70px;top:403.60px;font-size:11px;line-height:14px;transform:scaleX(0.9532);"><u>L</u>ookup</span>
<div class="btn" style="left:171px;top:423.5px;width:44px;height:25px;"></div>
<span class="t" style="left:183.20px;top:428.60px;font-size:11px;line-height:14px;transform:scaleX(0.9656);">Add</span>
<span class="t" style="left:112.30px;top:454.60px;font-size:11px;line-height:14px;transform:scaleX(0.9999);">Az: 336</span>
<span class="t" style="left:170.30px;top:454.60px;font-size:11px;line-height:14px;transform:scaleX(0.9315);">18747 km</span>
<div class="" style="left:56px;top:477px;width:142.5px;height:57.5px;background:#000;border:4px solid #5a5a5a;border-top-color:#6e6e6e;border-left-color:#6e6e6e;border-right-color:#444;border-bottom-color:#444"></div>
<span class="t" style="left:66.80px;top:482.70px;font-size:19px;line-height:22px;transform:scaleX(1.1072);color:#ff0;">2010 Nov 28</span>
<span class="t" style="left:84.70px;top:506.90px;font-size:19px;line-height:22px;transform:scaleX(1.1114);color:#ff0;">02:42:14</span>
<div class="grv" style="left:245px;top:391.5px;width:133.5px;height:151.5px;"></div>
<div class="flat" style="left:248.7px;top:404.5px;width:61px;height:20.2px;"></div>
<span class="t" style="left:259.00px;top:407.60px;font-size:11px;line-height:14px;transform:scaleX(0.9864);">Sync &nbsp; 0</span>
<div class="flat" style="left:248.7px;top:430.7px;width:61px;height:20.2px;"></div>
<span class="t" style="left:262.60px;top:433.80px;font-size:11px;line-height:14px;transform:scaleX(0.9259);">Clip &nbsp; 0</span>
<div class="flat" style="left:248.7px;top:456.3px;width:61px;height:20.2px;"></div>
<span class="t" style="left:256.80px;top:458.70px;font-size:11px;line-height:14px;transform:scaleX(1.0317);">Tol &nbsp; 400</span>
<div class="btn" style="left:247.5px;top:479px;width:63.5px;height:23.5px;"></div>
<span class="t" style="left:259.00px;top:482.80px;font-size:11px;line-height:14px;transform:scaleX(0.9714);">Defaults</span>
<div class="flat" style="left:248.7px;top:508.7px;width:61px;height:20.6px;"></div>
<span class="t" style="left:255.50px;top:511.70px;font-size:11px;line-height:14px;transform:scaleX(0.9878);">Dsec &nbsp;0.0</span>
<div class="flat" style="left:312.5px;top:508.7px;width:63.8px;height:20.6px;"></div>
<span class="t" style="left:323.60px;top:511.70px;font-size:11px;line-height:14px;transform:scaleX(0.9837);">Shift 0.0</span>
<div class="chk" style="left:318px;top:409px;width:12.5px;height:13px;"></div>
<div class="chk" style="left:318px;top:435px;width:12.5px;height:13px;"></div>
<div class="chk" style="left:318px;top:460.3px;width:12.5px;height:13px;"></div>
<div class="chk" style="left:318px;top:485px;width:12.5px;height:13px;"></div>
<svg style="left:318.5px;top:485.5px" width="12" height="12"><path d="M2.8 5.2 L5 7.8 L9.6 2.8" stroke="#000" stroke-width="2" fill="none"/></svg>
<span class="t" style="left:335.90px;top:407.80px;font-size:11px;line-height:14px;transform:scaleX(0.9443);"><u>Z</u>ap</span>
<span class="t" style="left:335.90px;top:433.70px;font-size:11px;line-height:14px;transform:scaleX(0.8900);">NB</span>
<span class="t" style="left:335.90px;top:459.60px;font-size:11px;line-height:14px;transform:scaleX(0.9756);"><u>F</u>reeze</span>
<span class="t" style="left:335.90px;top:483.60px;font-size:11px;line-height:14px;transform:scaleX(0.9318);">AFC</span>
<div class="grv" style="left:380.5px;top:391.5px;width:286.5px;height:152.6px;"></div>
<div class="chk" style="left:390px;top:399.5px;width:12px;height:12px;"></div>
<svg style="left:390px;top:399.5px" width="12" height="12"><path d="M2.8 5.2 L5 7.8 L9.6 2.8" stroke="#000" stroke-width="2" fill="none"/></svg>
<span class="t" style="left:408.40px;top:397.80px;font-size:11px;line-height:14px;transform:scaleX(0.9439);">Tx First</span>
<div class="" style="left:385.5px;top:420px;width:29px;height:19px;background:#f6f2e2;box-shadow:inset 1px 1px 0 #bbb,inset -1px -1px 0 #fff"></div>
<span class="t" style="left:388.40px;top:422.80px;font-size:11px;line-height:14px;transform:scaleX(0.9889);color:#b8b4a8;">26</span>
<span class="t" style="left:421.80px;top:422.80px;font-size:11px;line-height:14px;transform:scaleX(0.8996);">Rpt</span>
<div class="chk" style="left:390px;top:449.5px;width:12px;height:12px;background:#ddd"></div>
<span class="t" style="left:409.40px;top:448.70px;font-size:11px;line-height:14px;transform:scaleX(0.9385);color:#fff;">Sh Msg</span>
<span class="t" style="left:408.40px;top:447.70px;font-size:11px;line-height:14px;transform:scaleX(0.9385);color:#a8a49c;">Sh Msg</span>
<div class="btn" style="left:385.5px;top:468px;width:70px;height:24.5px;"></div>
<span class="t" style="left:399.20px;top:472.70px;font-size:11px;line-height:14px;transform:scaleX(0.9355);">TxDF = 0</span>
<div class="btn" style="left:385.5px;top:493px;width:70px;height:24.5px;"></div>
<span class="t" style="left:388.80px;top:497.80px;font-size:11px;line-height:14px;transform:scaleX(0.9672);"><u>G</u>enStdMsgs</span>
<div class="" style="left:385px;top:517px;width:70.8px;height:26.2px;background:#f00;border:solid #000;border-width:3.6px 2.6px 3.3px 2.3px"></div>
<div class="" style="left:388px;top:521px;width:65px;height:19px;border:1px dotted #300"></div>
<span class="t" style="left:394.60px;top:522.70px;font-size:11px;line-height:14px;transform:scaleX(0.9533);"><u>A</u>uto is ON</span>
<div class="sunk" style="left:460px;top:395.4px;width:149.5px;height:18.5px;background:#fff"></div>
<span class="t" style="left:462.80px;top:398.10px;font-size:11px;line-height:14px;transform:scaleX(0.9491);">PY1KK JA6AHB PM53</span>
<div class="rad" style="left:615.5px;top:399.5px;width:11px;height:11px;"></div>
<div class="btn" style="left:638.5px;top:392.8px;width:26.5px;height:24.8px;"></div>
<span class="t" style="left:642.30px;top:398.20px;font-size:11px;line-height:14px;transform:scaleX(0.9434);">Tx<u>1</u></span>
<div class="sunk" style="left:460px;top:420px;width:149.5px;height:18.5px;background:#fff"></div>
<span class="t" style="left:462.80px;top:422.80px;font-size:11px;line-height:14px;transform:scaleX(0.9466);">PY1KK JA6AHB PM53 OOO</span>
<div class="rad" style="left:615.5px;top:424.5px;width:11px;height:11px;"></div>
<div class="btn" style="left:638.5px;top:417.8px;width:26.5px;height:24.8px;"></div>
<span class="t" style="left:642.30px;top:423.05px;font-size:11px;line-height:14px;transform:scaleX(0.9434);">Tx<u>2</u></span>
<div class="sunk" style="left:460px;top:445.2px;width:149.5px;height:18.5px;background:#fff"></div>
<span class="t" style="left:462.80px;top:447.40px;font-size:11px;line-height:14px;transform:scaleX(0.8909);">RO</span>
<div class="rad" style="left:615.5px;top:449.5px;width:11px;height:11px;"></div>
<div class="btn" style="left:638.5px;top:442.8px;width:26.5px;height:24.8px;"></div>
<span class="t" style="left:642.30px;top:447.90px;font-size:11px;line-height:14px;transform:scaleX(0.9434);">Tx<u>3</u></span>
<div class="sunk" style="left:460px;top:470.4px;width:149.5px;height:18.5px;background:#6ff"></div>
<span class="t" style="left:462.80px;top:473.10px;font-size:11px;line-height:14px;transform:scaleX(0.8560);">RRR</span>
<div class="rad" style="left:615.5px;top:474.5px;width:11px;height:11px;"></div>
<div class="" style="left:619.3px;top:478.1px;width:3.8px;height:3.8px;background:#000;border-radius:50%"></div>
<div class="btn" style="left:638.5px;top:467.8px;width:26.5px;height:24.8px;"></div>
<span class="t" style="left:642.30px;top:472.75px;font-size:11px;line-height:14px;transform:scaleX(0.9434);">Tx<u>4</u></span>
<div class="sunk" style="left:460px;top:495.5px;width:149.5px;height:18.5px;background:#fff"></div>
<span class="t" style="left:462.80px;top:497.70px;font-size:11px;line-height:14px;transform:scaleX(0.9235);">73</span>
<div class="rad" style="left:615.5px;top:499.5px;width:11px;height:11px;"></div>
<div class="btn" style="left:638.5px;top:492.8px;width:26.5px;height:24.8px;"></div>
<span class="t" style="left:642.30px;top:497.60px;font-size:11px;line-height:14px;transform:scaleX(0.9434);">Tx<u>5</u></span>
<div class="sunk" style="left:460px;top:520.6px;width:149.5px;height:18.5px;background:#fff"></div>
<span class="t" style="left:462.80px;top:522.30px;font-size:11px;line-height:14px;transform:scaleX(0.9395);">CQ JA6AHB PM53</span>
<div class="rad" style="left:615.5px;top:524.5px;width:11px;height:11px;"></div>
<div class="btn" style="left:638.5px;top:517.8px;width:26.5px;height:24.8px;"></div>
<span class="t" style="left:642.30px;top:522.45px;font-size:11px;line-height:14px;transform:scaleX(0.9434);">Tx<u>6</u></span>
<div class="" style="left:8px;top:546.3px;width:659px;height:1.5px;background:#000"></div>
<div class="st" style="left:8px;top:546.3px;width:85.5px;height:22.7px;"></div>
<span class="t" style="left:16.70px;top:550.40px;font-size:11px;line-height:14px;transform:scaleX(0.9752);">1.0000 0.9999</span>
<div class="st" style="left:94.8px;top:546.3px;width:45.2px;height:22.7px;background:#0ff"></div>
<span class="t" style="left:102.00px;top:550.40px;font-size:11px;line-height:14px;transform:scaleX(0.9122);">JT65B</span>
<div class="st" style="left:141.5px;top:546.3px;width:81px;height:22.7px;"></div>
<span class="t" style="left:148.00px;top:550.40px;font-size:11px;line-height:14px;transform:scaleX(0.9815);">Freeze DF: &nbsp; 0</span>
<div class="st" style="left:224.5px;top:546.3px;width:92px;height:22.7px;background:#f00"></div>
<span class="t" style="left:231.70px;top:550.40px;font-size:11px;line-height:14px;transform:scaleX(0.9826);">Rx noise:-37 dB</span>
<div class="st" style="left:318px;top:546.3px;width:88px;height:22.7px;"></div>
<span class="t" style="left:324.70px;top:550.40px;font-size:11px;line-height:14px;transform:scaleX(0.9461);">TR Period: 60 s</span>
<div class="st" style="left:552px;top:546.3px;width:115px;height:22.7px;background:#6ff"></div>
<span class="t" style="left:558.90px;top:550.40px;font-size:11px;line-height:14px;transform:scaleX(0.9199);">Txing: &nbsp;RRR</span>
</div></body></html>
